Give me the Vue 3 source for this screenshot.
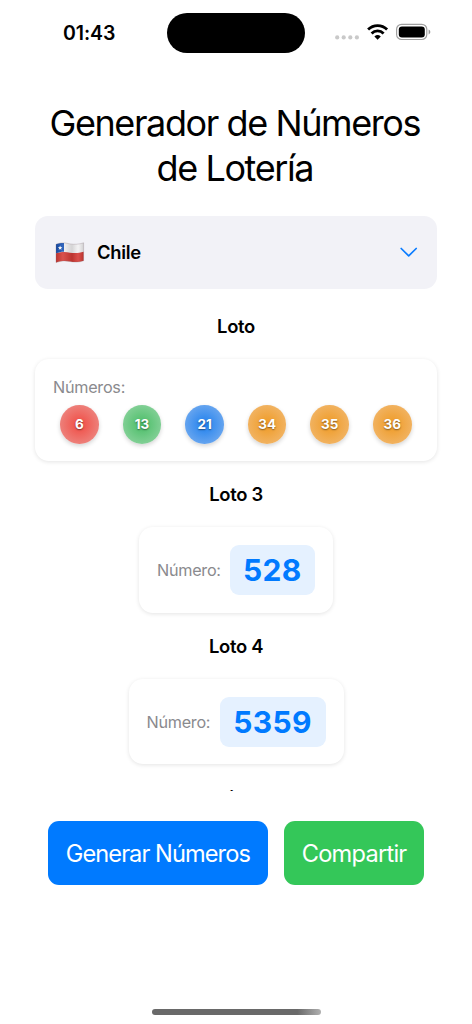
<script setup>
const balls = [
  { n: 6, tone: 'red' },
  { n: 13, tone: 'green' },
  { n: 21, tone: 'blue' },
  { n: 34, tone: 'orange' },
  { n: 35, tone: 'orange' },
  { n: 36, tone: 'orange' },
]
const singles = [
  { title: 'Loto 3', value: '528', size: 'three' },
  { title: 'Loto 4', value: '5359', size: 'four' },
]
</script>

<template>
  <div class="screen">
    <header class="status">
      <span class="time"><span class="t">01:43</span></span>
      <div class="island"></div>
      <div class="indicators">
        <svg width="98" height="20" viewBox="0 0 98 20">
          <g fill="#c9c9c9">
            <circle cx="3.2" cy="14.4" r="2.1" />
            <circle cx="9.7" cy="14.4" r="2.1" />
            <circle cx="16.3" cy="14.4" r="2.1" />
            <circle cx="22.9" cy="14.4" r="2.1" />
          </g>
          <g fill="none" stroke="#000" stroke-width="2.8">
            <path d="M34.1 6.6a13.5 13.5 0 0 1 19 0" />
            <path d="M37.6 10.4a8.5 8.5 0 0 1 12 0" />
          </g>
          <path d="M43.6 16.8l-3.2-3.3a4.7 4.7 0 0 1 6.4 0z" fill="#000" />
          <rect x="62.6" y="1.3" width="30.2" height="15.2" rx="5" fill="#fff" stroke="#a0a0a0" stroke-width="1.2" />
          <rect x="64.8" y="3.4" width="26" height="11" rx="3.2" fill="#000" />
          <path d="M94.6 6.6c2.3 .8 2.3 4 0 4.8z" fill="#999" />
        </svg>
      </div>
    </header>

    <h1 class="title"><span class="t">Generador de Números</span><br /><span class="t">de Lotería</span></h1>

    <button class="country">
      <svg class="flag" width="30" height="22" viewBox="0 0 30 22">
        <defs>
          <linearGradient id="wave" x1="0" x2="1" y1="0" y2="0">
            <stop offset="0" stop-color="#000" stop-opacity=".12" />
            <stop offset=".25" stop-color="#fff" stop-opacity=".12" />
            <stop offset=".58" stop-color="#000" stop-opacity=".12" />
            <stop offset=".8" stop-color="#fff" stop-opacity=".1" />
            <stop offset="1" stop-color="#000" stop-opacity=".14" />
          </linearGradient>
        </defs>
        <path d="M1 2.2C8 -.2 11 1.2 15 1.9S24 2.4 28.6 .8V18.8C24 20.4 19 20.3 15 19.5S7 18.5 1 20.5Z" fill="#f2f1f2" />
        <path d="M1 11.3C8 9.4 11 10 15 10.7S24 11.3 28.6 9.8V18.8C24 20.4 19 20.3 15 19.5S7 18.5 1 20.5Z" fill="#d53a35" />
        <path d="M1 2.2C4 1.1 6.5 .9 9 1V9.8C6.5 9.7 4 10.3 1 11.3Z" fill="#1651b4" />
        <path d="M5.1 3.6l.6 1.5 1.6.1-1.2 1 .4 1.5-1.4-.8-1.4.9.4-1.6-1.2-1 1.6-.1z" fill="#fff" />
        <path d="M1 2.2C8 -.2 11 1.2 15 1.9S24 2.4 28.6 .8V18.8C24 20.4 19 20.3 15 19.5S7 18.5 1 20.5Z" fill="url(#wave)" stroke="#806d74" stroke-opacity=".45" stroke-width=".6" />
      </svg>
      <span class="country-name"><span class="t">Chile</span></span>
      <svg class="chevron" width="18" height="12" viewBox="0 0 18 12">
        <path d="M1.2 2.5L8.7 9.9L16.2 2.5" fill="none" stroke="#0a7cff" stroke-width="1.7" stroke-linecap="round" stroke-linejoin="round" />
      </svg>
    </button>

    <main class="results">
      <h2 class="game"><span class="t">Loto</span></h2>
      <section class="card wide">
        <div class="label"><span class="t">Números:</span></div>
        <div class="balls">
          <div v-for="b in balls" :key="b.n" class="ball" :class="b.tone">{{ b.n }}</div>
        </div>
      </section>
      <template v-for="s in singles" :key="s.title">
        <h2 class="game"><span class="t">{{ s.title }}</span></h2>
        <section class="card single" :class="s.size">
          <div class="label"><span class="t">Número:</span></div>
          <div class="value"><span class="t">{{ s.value }}</span></div>
        </section>
      </template>
      <h2 class="game"><span class="t">K<span class="raised">i</span>no</span></h2>
    </main>

    <div class="actions">
      <button class="action generate"><span class="t">Generar Números</span></button>
      <button class="action share"><span class="t">Compartir</span></button>
    </div>
    <div class="home"></div>
  </div>
</template>

<style>
body {
  background: #fff;
}
</style>

<style scoped>
.screen {
  display: flex;
  flex-direction: column;
  width: 472px;
  height: 1024px;
  overflow: hidden;
  background: #fff;
  color: #000;
  font-family: Inter, "Liberation Sans", sans-serif;
}
.t {
  white-space: nowrap;
}
.status {
  display: grid;
  grid-template-columns: 167px 138px 1fr;
  height: 66px;
  flex: none;
  align-items: center;
}
.time {
  padding-left: 63px;
  font-size: 19.5px;
  font-weight: 600;
  letter-spacing: -0.1px;
}
.island {
  height: 40.5px;
  border-radius: 21px;
  background: #000;
}
.indicators {
  display: flex;
  padding-left: 29px;
}
.title {
  margin: 34.5px 0 0;
  padding-right: 2.4px;
  flex: none;
  height: 90px;
  font-size: 36px;
  line-height: 45px;
  font-weight: 400;
  letter-spacing: -1.41px;
  text-align: center;
}
button {
  border: 0;
  font-family: inherit;
  color: inherit;
}
.country {
  display: flex;
  align-items: center;
  flex: none;
  margin: 25.5px 35px 0;
  padding: 0 19px 0 20px;
  height: 72.5px;
  border-radius: 13px;
  background: #f2f2f7;
}
.flag {
  margin: 1px 12px 0 0;
}
.country-name {
  flex: 1;
  text-align: left;
  font-size: 18.4px;
  font-weight: 600;
  letter-spacing: -0.3px;
}
.results {
  display: flex;
  flex-direction: column;
  align-items: center;
  flex: none;
  height: 502.5px;
  overflow: hidden;
}
.game {
  flex: none;
  margin: 26.5px 0 21px;
  height: 23px;
  line-height: 23px;
  font-size: 18.4px;
  font-weight: 600;
  letter-spacing: -0.3px;
}
.card {
  flex: none;
  box-sizing: border-box;
  border-radius: 14px;
  background: #fff;
  box-shadow: 0 1px 4px rgba(0, 0, 0, 0.11);
}
.card + .game {
  margin-top: 22px;
}
.card + .game:last-child {
  margin-top: 24px;
}
.raised {
  vertical-align: 2px;
  line-height: 1;
}
.wide {
  width: 402px;
  height: 102px;
  padding: 18px;
}
.label {
  font-size: 16.2px;
  line-height: 20px;
  letter-spacing: -0.26px;
  color: #8a8a8e;
}
.balls {
  display: flex;
  justify-content: space-between;
  padding: 8px 7.5px 0 7.2px;
}
.ball {
  display: flex;
  align-items: center;
  justify-content: center;
  width: 38.5px;
  height: 38.5px;
  border-radius: 50%;
  color: #fff;
  font-size: 13.4px;
  font-weight: 700;
  text-shadow: 0 1px 1.5px rgba(0, 0, 0, 0.45);
  box-shadow: 0 2px 4px rgba(0, 0, 0, 0.17);
}
.red {
  background: radial-gradient(circle closest-side, #f14a42, #ed807a);
}
.green {
  background: radial-gradient(circle closest-side, #49bd66, #80cf94);
}
.blue {
  background: radial-gradient(circle closest-side, #1f80ee, #65a4ef);
}
.orange {
  background: radial-gradient(circle closest-side, #ef9a23, #f1b260);
}
.single {
  display: flex;
  align-items: center;
  justify-content: space-between;
  height: 85.5px;
  padding: 0 18px;
}
.three {
  width: 194px;
}
.four {
  width: 215px;
  padding-top: 1px;
}
.value {
  display: flex;
  align-items: center;
  justify-content: center;
  width: 85.5px;
  height: 50px;
  border-radius: 9px;
  background: #e5f1ff;
  color: #007aff;
  font-size: 30px;
  font-weight: 700;
  letter-spacing: 0.3px;
}
.four .value {
  width: 106px;
}
.actions {
  display: flex;
  flex: none;
  gap: 16.5px;
  padding: 30px 48px 0;
}
.action {
  display: flex;
  align-items: center;
  justify-content: center;
  padding: 1.5px 0 0;
  height: 64px;
  border-radius: 11px;
  color: #fff;
  font-size: 23.6px;
}
.generate {
  width: 220px;
  background: #007aff;
  letter-spacing: -0.92px;
}
.share {
  width: 140px;
  background: #34c759;
  letter-spacing: -0.75px;
}
.home {
  width: 169px;
  height: 6px;
  margin: auto auto 9px 151.5px;
  border-radius: 3px;
  background: linear-gradient(90deg, #696969 86%, #b0b0b0);
}
</style>
